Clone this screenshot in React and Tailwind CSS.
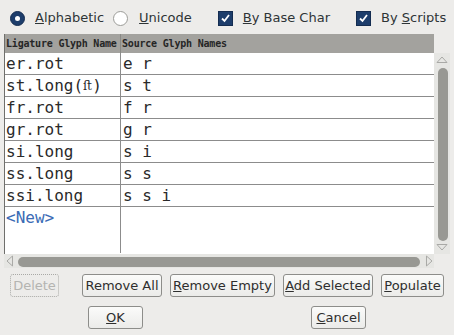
const ROWS = [
  ["er.rot", "e r"],
  ["st.long(ﬅ)", "s t"],
  ["fr.rot", "f r"],
  ["gr.rot", "g r"],
  ["si.long", "s i"],
  ["ss.long", "s s"],
  ["ssi.long", "s s i"],
];

function Radio({ on }) {
  return on ? (
    <span className="w-[15px] h-[15px] rounded-full bg-[#1d3d6b] border border-[#142c50] flex items-center justify-center">
      <span className="w-[5px] h-[5px] rounded-full bg-white" />
    </span>
  ) : (
    <span className="block w-[15px] h-[15px] rounded-full bg-white border border-[#9c9c98]" />
  );
}

function Check() {
  return (
    <span className="w-[15px] h-[15px] bg-[#1d3d6b] border border-[#142c50] flex items-center justify-center">
      <svg width="11" height="11" viewBox="0 0 11 11">
        <path d="M2 5.5 L4.5 8 L9 2" fill="none" stroke="white" strokeWidth="1.8" />
      </svg>
    </span>
  );
}

function Btn({ children, className = "" }) {
  return (
    <div
      className={`h-[23px] flex items-center justify-center rounded-[3px] border border-[#8d8d8a] bg-gradient-to-b from-[#fbfbfa] to-[#ebebe9] text-[13px] text-[#2e2e2e] ${className}`}
    >
      {children}
    </div>
  );
}

export default function App() {
  return (
    <div className="w-[454px] h-[335px] bg-[#edecea] font-['DejaVu_Sans',sans-serif] text-[13px] text-[#2e3436] flex flex-col">
      {/* ── Top options ───────────────────────────────── */}
      <div className="h-[34px] flex items-center pl-[10px] pt-[2px]">
        <Radio on />
        <span className="ml-[10px]"><u>A</u>lphabetic</span>
        <span className="ml-[9px]"><Radio /></span>
        <span className="ml-[11px]"><u>U</u>nicode</span>
        <span className="ml-[26px]"><Check /></span>
        <span className="ml-[10px]"><u>B</u>y Base Char</span>
        <span className="ml-[26px]"><Check /></span>
        <span className="ml-[10px]">By <u>S</u>cripts</span>
      </div>

      {/* ── Table ─────────────────────────────────────── */}
      <div className="ml-[4px] w-[446px] h-[234px] flex flex-col">
        <div className="flex h-[220px]">
          <div className="w-[430px] flex flex-col border-l border-[#6f6f6c] bg-white">
            <div className="h-[19px] bg-[#a3a29e] flex items-center font-['DejaVu_Sans_Mono',monospace] font-bold text-[10px] text-[#262626] tracking-[-0.2px]">
              <div className="w-[116px] pl-[1px] border-r border-[#8a8a86] h-full flex items-center whitespace-nowrap overflow-hidden">
                Ligature Glyph Name
              </div>
              <div className="pl-[1px]">Source Glyph Names</div>
            </div>
            <div className="flex-1 relative font-['DejaVu_Sans_Mono',monospace] text-[16px] text-[#2a2a2a]">
              {ROWS.map(([a, b]) => (
                <div key={a} className="h-[22px] flex border-b border-[#8c8c8c]">
                  <div className="w-[116px] pl-[1px] border-r border-[#8c8c8c] flex items-center whitespace-nowrap">
                    {a.includes("ﬅ") ? (
                      <>
                        st.long(<span className="font-['DejaVu_Serif',serif] text-[12px]">ﬅ</span>)
                      </>
                    ) : (
                      a
                    )}
                  </div>
                  <div className="pl-[2px] flex items-center whitespace-pre">{b}</div>
                </div>
              ))}
              <div className="flex h-[46px]">
                <div className="w-[116px] pl-[1px] border-r border-[#8c8c8c] text-[#3a6bb5] leading-[22px]">
                  &lt;New&gt;
                </div>
              </div>
            </div>
          </div>
          {/* vertical scrollbar */}
          <div className="w-[16px] mt-[19px] bg-[#e6e6e3] flex flex-col items-center">
            <svg width="12" height="9" viewBox="0 0 12 9" className="mt-[2px]">
              <path d="M1 7.5 L6 2 L11 7.5 Z" fill="none" stroke="#a9a9a6" strokeWidth="1" />
            </svg>
            <div className="w-[10px] ml-[2px] mt-[4px] h-[173px] rounded-full bg-[#989893]" />
            <svg width="12" height="9" viewBox="0 0 12 9" className="mt-[2px]">
              <path d="M1 1.5 L6 7 L11 1.5 Z" fill="none" stroke="#a9a9a6" strokeWidth="1" />
            </svg>
          </div>
        </div>
        {/* horizontal scrollbar */}
        <div className="h-[14px] w-[430px] bg-[#e6e6e3] flex items-center pl-[1px]">
          <svg width="9" height="12" viewBox="0 0 9 12">
            <path d="M7.5 1 L2 6 L7.5 11 Z" fill="none" stroke="#a9a9a6" strokeWidth="1" />
          </svg>
          <div className="ml-[4px] mt-[2px] w-[403px] h-[10px] rounded-full bg-[#989893]" />
          <svg width="9" height="12" viewBox="0 0 9 12" className="ml-[5px]">
            <path d="M1.5 1 L7 6 L1.5 11 Z" fill="none" stroke="#a9a9a6" strokeWidth="1" />
          </svg>
        </div>
      </div>

      {/* ── Buttons ───────────────────────────────────── */}
      <div className="flex items-center mt-[6px] pl-[10px]">
        <div className="h-[23px] w-[49px] flex items-center justify-center rounded-[3px] border border-dotted border-[#a9a9a6] text-[#b4b4b1]">
          Delete
        </div>
        <Btn className="ml-[23px] w-[80px]">Remove All</Btn>
        <Btn className="ml-[8px] w-[105px]"><span><u>R</u>emove Empty</span></Btn>
        <Btn className="ml-[8px] w-[90px]"><span><u>A</u>dd Selected</span></Btn>
        <Btn className="ml-[8px] w-[63px]"><span><u>P</u>opulate</span></Btn>
      </div>
      <div className="flex items-center mt-[9px]">
        <Btn className="ml-[88px] w-[55px] border-[#6f98cf]"><span><u>O</u>K</span></Btn>
        <Btn className="ml-[168px] w-[55px]"><span><u>C</u>ancel</span></Btn>
      </div>
    </div>
  );
}
